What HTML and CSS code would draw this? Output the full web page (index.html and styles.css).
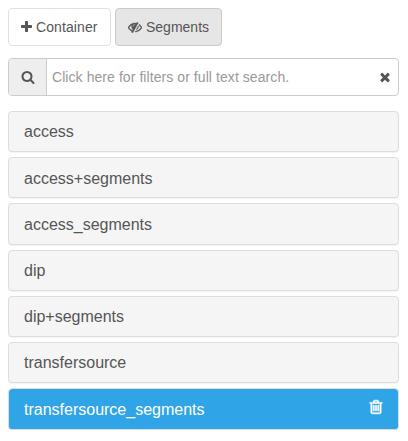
FILE: index.html
```html
<!DOCTYPE html>
<html lang="en">
<head>
<meta charset="utf-8">
<title>Containers</title>
<link rel="stylesheet" href="styles.css">
</head>
<body>
<div class="toolbar">
  <button class="btn btn-container" type="button"><svg class="icon icon-plus" viewBox="192 0 1408 1792"><path d="M1600 736v192q0 40-28 68t-68 28h-416v416q0 40-28 68t-68 28h-192q-40 0-68-28t-28-68v-416h-416q-40 0-68-28t-28-68v-192q0-40 28-68t68-28h416v-416q0-40 28-68t68-28h192q40 0 68 28t28 68v416h416q40 0 68 28t28 68z"/></svg><span>Container</span></button>
  <button class="btn btn-segments active" type="button"><svg class="icon icon-eye" viewBox="0 0 1792 1792"><path d="M555 1335l78-141q-87-63-136-159t-49-203q0-121 61-225-229 117-381 353 167 258 427 375zm389-759q0-20-14-34t-34-14q-125 0-214.5 89.5t-89.5 214.5q0 20 14 34t34 14 34-14 14-34q0-86 61-147t147-61q20 0 34-14t14-34zm363-191q0 7-1 9-106 189-316 567t-315 566l-49 89q-10 16-28 16-12 0-134-70-16-10-16-28 0-12 44-87-143-65-263.500-173t-208.500-245q-20-31-20-69t20-69q153-235 380-371t496-136q89 0 180 17l54-97q10-16 28-16 5 0 18 6t31 15.500 33 18.500 31.500 18.500 19.500 11.500q16 10 16 27zm37 447q0 139-79 253.500t-209 164.500l280-502q8 45 8 84zm448 128q0 35-20 69-39 64-109 145-150 172-347.500 267t-419.500 95l74-132q212-18 392.500-137t301.500-307q-115-179-282-294l63-112q95 64 182.500 153t144.500 184q20 34 20 69z"/></svg><span>Segments</span></button>
</div>
<div class="search">
  <span class="search-addon"><svg class="icon" viewBox="0 0 1792 1792"><path d="M1216 832q0-185-131.500-316.500t-316.500-131.500-316.500 131.500-131.500 316.500 131.500 316.500 316.500 131.500 316.500-131.500 131.500-316.500zm512 832q0 52-38 90t-90 38q-54 0-90-38l-343-342q-179 124-399 124-143 0-273.500-55.500t-225-150-150-225-55.500-273.500 55.500-273.500 150-225 225-150 273.500-55.500 273.500 55.500 225 150 150 225 55.500 273.500q0 220-124 399l343 343q37 37 37 90z"/></svg></span>
  <span class="search-field">Click here for filters or full text search.</span>
  <svg class="icon search-clear" viewBox="0 0 1792 1792"><path d="M1490 1322q0 40-28 68l-136 136q-28 28-68 28t-68-28l-294-294-294 294q-28 28-68 28t-68-28l-136-136q-28-28-28-68t28-68l294-294-294-294q-28-28-28-68t28-68l136-136q28-28 68-28t68 28l294 294 294-294q28-28 68-28t68 28l136 136q28 28 28 68t-28 68l-294 294 294 294q28 28 28 68z"/></svg>
</div>
<div class="panels">
  <div class="panel">access</div>
  <div class="panel">access+segments</div>
  <div class="panel">access_segments</div>
  <div class="panel">dip</div>
  <div class="panel">dip+segments</div>
  <div class="panel">transfersource</div>
  <div class="panel selected"><span>transfersource_segments</span><svg class="icon icon-trash" viewBox="0 0 1792 1792"><path d="M704 736v576q0 14-9 23t-23 9h-64q-14 0-23-9t-9-23v-576q0-14 9-23t23-9h64q14 0 23 9t9 23zm256 0v576q0 14-9 23t-23 9h-64q-14 0-23-9t-9-23v-576q0-14 9-23t23-9h64q14 0 23 9t9 23zm256 0v576q0 14-9 23t-23 9h-64q-14 0-23-9t-9-23v-576q0-14 9-23t23-9h64q14 0 23 9t9 23zm128 724v-948h-896v948q0 22 7 40.500t14.500 27 10.500 8.500h832q3 0 10.500-8.500t14.500-27 7-40.500zm-672-1076h448l-48-117q-7-9-17-11h-317q-10 2-17 11zm928 32v64q0 14-9 23t-23 9h-96v948q0 83-47 143.500t-113 60.500h-832q-66 0-113-58.500t-47-141.500v-952h-96q-14 0-23-9t-9-23v-64q0-14 9-23t23-9h309l70-167q15-37 54-63t79-26h320q40 0 79 26t54 63l70 167h309q14 0 23 9t9 23z"/></svg></div>
</div>
</body>
</html>
```
FILE: styles.css
```css
* {
  box-sizing: border-box;
}

body {
  margin: 0;
  padding: 8px 9px 0 8px;
  background: #fff;
  color: #555;
  font: 14px/20px "Liberation Sans", Arial, sans-serif;
}

.icon {
  display: block;
  flex: none;
  width: 14px;
  height: 14px;
  fill: currentColor;
}

.icon-plus {
  width: 11px;
}

.icon-eye {
  stroke: currentColor;
  stroke-width: 50;
}

.toolbar {
  display: flex;
  gap: 4px;
  margin-bottom: 12px;
}

.btn {
  display: flex;
  align-items: center;
  gap: 4px;
  height: 38px;
  padding: 0 12px;
  border: 1px solid #e1e1e1;
  border-radius: 4px;
  background: #fff;
  color: #555;
  font: inherit;
}

.btn-container {
  width: 103px;
  letter-spacing: 0.1px;
}

.btn-segments {
  width: 107px;
}

.btn.active {
  border-color: #c9c9c9;
  background: #e6e6e6;
}

.search {
  display: flex;
  align-items: center;
  height: 38px;
  margin-bottom: 15px;
  border: 1px solid #ccc;
  border-radius: 4px;
  background: #fff;
}

.search-addon {
  display: flex;
  align-items: center;
  align-self: stretch;
  width: 38px;
  padding-left: 12px;
  border-right: 1px solid #ccc;
  border-radius: 3px 0 0 3px;
  background: #eee;
}

.search-field {
  flex: 1;
  padding-left: 5px;
  color: #999;
  letter-spacing: 0.07px;
}

.search-clear {
  margin-right: 6px;
}

.panels {
  display: grid;
  gap: 5px;
}

.panel {
  display: flex;
  align-items: center;
  justify-content: space-between;
  height: 41.2px;
  padding: 1.6px 15px 0;
  border: 1px solid #ddd;
  border-radius: 4px;
  background: #f5f5f5;
  box-shadow: 0 1px 1px rgba(0, 0, 0, 0.05);
  font-size: 16px;
  line-height: 18px;
}

.panel.selected {
  height: 42px;
  border-radius: 4px 4px 3px 3px;
  background: #2fa4e7 padding-box;
  color: #fff;
}

.icon-trash {
  width: 16px;
  height: 16px;
  margin: -5px -1px 0 0;
  stroke: currentColor;
  stroke-width: 70;
}
```
